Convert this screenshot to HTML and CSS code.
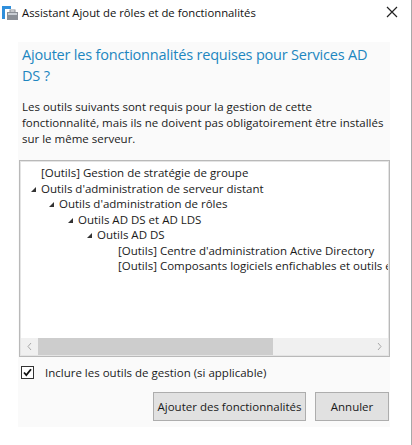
FILE: index.html
```html
<!DOCTYPE html>
<html lang="fr">
<head>
<meta charset="utf-8">
<title>Assistant Ajout de rôles et de fonctionnalités</title>
<link rel="stylesheet" href="styles.css">
</head>
<body>
<div class="window">
  <div class="titlebar">
    <svg class="app-icon" width="16" height="14" viewBox="0 0 16 14">
      <rect x="0" y="0" width="9" height="3" fill="#2f8fdc"/>
      <rect x="0" y="0" width="3" height="13" fill="#2f8fdc"/>
      <rect x="5" y="6" width="11" height="8" fill="#8a8f96"/>
      <rect x="6" y="7" width="9" height="2" fill="#c9ced4"/>
      <rect x="8" y="4" width="5" height="2" fill="none" stroke="#8a8f96" stroke-width="1"/>
    </svg>
    <span class="title">Assistant Ajout de rôles et de fonctionnalités</span>
    <svg class="close" width="12" height="12" viewBox="0 0 12 12">
      <path d="M1 1 L11 11 M11 1 L1 11" stroke="#222" stroke-width="1.2"/>
    </svg>
  </div>
  <div class="panel">
    <h1 class="heading">Ajouter les fonctionnalités requises pour Services AD DS ?</h1>
    <p class="desc">Les outils suivants sont requis pour la gestion de cette fonctionnalité, mais ils ne doivent pas obligatoirement être installés sur le même serveur.</p>
    <div class="treebox">
      <ul class="tree">
        <li class="row lvl0 leaf">[Outils] Gestion de stratégie de groupe</li>
        <li class="row lvl0"><span class="exp"></span>Outils d'administration de serveur distant</li>
        <li class="row lvl1"><span class="exp"></span>Outils d'administration de rôles</li>
        <li class="row lvl2"><span class="exp"></span>Outils AD DS et AD LDS</li>
        <li class="row lvl3"><span class="exp"></span>Outils AD DS</li>
        <li class="row lvl4 leaf">[Outils] Centre d'administration Active Directory</li>
        <li class="row lvl4 leaf">[Outils] Composants logiciels enfichables et outils en ligne de commande AD DS</li>
      </ul>
      <div class="hscroll">
        <svg class="arrow" width="17" height="17" viewBox="0 0 17 17"><path d="M10 5 L7 8.5 L10 12" fill="none" stroke="#a8a8a8" stroke-width="1"/></svg>
        <div class="track"><div class="thumb"></div></div>
        <svg class="arrow" width="17" height="17" viewBox="0 0 17 17"><path d="M7 5 L10 8.5 L7 12" fill="none" stroke="#a8a8a8" stroke-width="1"/></svg>
      </div>
    </div>
    <label class="check">
      <span class="box"><svg width="11" height="11" viewBox="0 0 11 11"><path d="M2 5.5 L4.3 8 L9 2.2" fill="none" stroke="#111" stroke-width="1.8"/></svg></span>
      Inclure les outils de gestion (si applicable)
    </label>
    <div class="buttons">
      <button class="btn btn-add">Ajouter des fonctionnalités</button>
      <button class="btn btn-cancel">Annuler</button>
    </div>
  </div>
</div>
</body>
</html>
```
FILE: styles.css
```css
* { box-sizing: border-box; }
html, body { margin: 0; padding: 0; background: #fff; }
body {
  font-family: "Open Sans", "Noto Sans", "Liberation Sans", sans-serif;
  color: #1a1a1a;
}
.window {
  width: 412px;
  height: 445px;
  border-right: 1px solid #a9a9a9;
  background: #fff;
  display: flex;
  flex-direction: column;
}
.titlebar {
  height: 30px;
  display: flex;
  align-items: center;
  padding: 0 0 6px 2px;
  flex-shrink: 0;
}
.app-icon { margin-right: 4px; margin-top: 1px; }
.title {
  font-size: 11.3px;
  color: #111;
  flex: 1;
}
.close { margin-right: 13px; }
.panel {
  margin: 12px 0 0 18px;
  width: 372px;
  height: 385px;
  background: #fafafa;
  display: flex;
  flex-direction: column;
  padding: 2px 0 6px 0;
}
.heading {
  margin: 0 0 13px 4px;
  font-weight: normal;
  font-size: 14.5px;
  line-height: 21px;
  color: #1d86c0;
  width: 366px;
  letter-spacing: -0.2px;
}
.desc {
  margin: 0 0 13px 4px;
  font-size: 11.5px;
  line-height: 16px;
  color: #1a1a1a;
  width: 366px;
}
.treebox {
  margin-left: 1px;
  width: 371px;
  height: 198px;
  border: 1px solid #b9b9b9;
  box-shadow: inset 0 0 0 1px #e4e4e4;
  background: #fff;
  display: flex;
  flex-direction: column;
  padding: 1px;
}
.tree {
  list-style: none;
  margin: 0;
  padding: 3px 0 0 0;
  flex: 1;
  overflow: hidden;
}
.row {
  font-size: 11.5px;
  line-height: 15.5px;
  height: 15.5px;
  white-space: nowrap;
  display: flex;
  align-items: center;
  color: #1a1a1a;
}
.exp {
  width: 11px;
  height: 15px;
  flex-shrink: 0;
  position: relative;
}
.exp::before {
  content: "";
  position: absolute;
  left: 1px;
  top: 6px;
  width: 0;
  height: 0;
  border-left: 5px solid transparent;
  border-bottom: 5px solid #333;
}
.lvl0 { padding-left: 9px; }
.lvl1 { padding-left: 27px; }
.lvl2 { padding-left: 46px; }
.lvl3 { padding-left: 65px; }
.lvl0.leaf { padding-left: 20px; }
.lvl4.leaf { padding-left: 97px; }
.hscroll {
  height: 17px;
  display: flex;
  background: #f0f0f0;
  flex-shrink: 0;
}
.arrow { flex-shrink: 0; }
.track { flex: 1; display: flex; }
.thumb {
  width: 235px;
  background: #cdcdcd;
}
.check {
  display: flex;
  align-items: center;
  margin: 9px 0 0 3px;
  font-size: 11.5px;
  line-height: 13px;
  color: #1a1a1a;
}
.box {
  width: 13px;
  height: 13px;
  border: 1px solid #333;
  background: #fff;
  display: flex;
  align-items: center;
  justify-content: center;
  margin-right: 11px;
}
.buttons {
  display: flex;
  justify-content: flex-end;
  gap: 9px;
  margin-top: 13px;
  padding-right: 1px;
}
.btn {
  height: 29px;
  background: #e1e1e1;
  border: 1px solid #adadad;
  font-family: "Open Sans", "Noto Sans", "Liberation Sans", sans-serif;
  font-size: 11.5px;
  color: #1a1a1a;
  padding: 0;
}
.btn-add { width: 153px; }
.btn-cancel { width: 74px; }
```
